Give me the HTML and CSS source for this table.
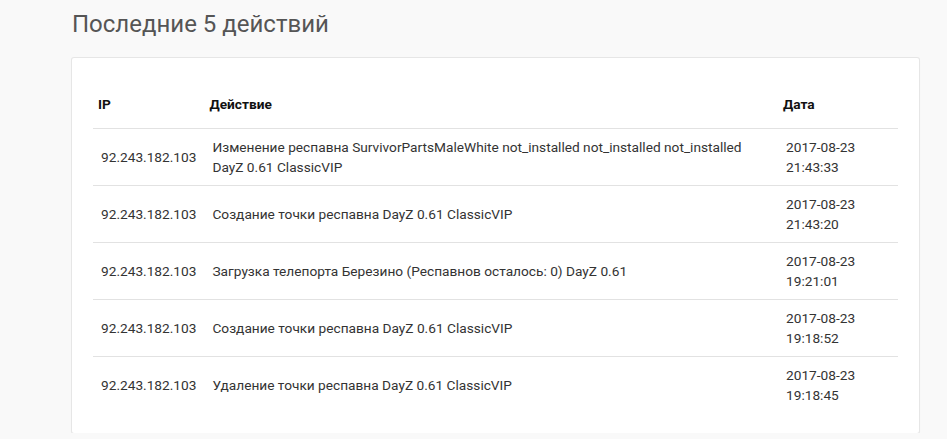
FILE: index.html
```html
<!DOCTYPE html>
<html lang="ru">
<head>
<meta charset="utf-8">
<title>Последние 5 действий</title>
<link rel="stylesheet" href="styles.css">
</head>
<body>
<main class="page">
  <h1 class="title">Последние 5 действий</h1>
  <section class="card">
    <table class="log">
      <thead>
        <tr>
          <th class="col-ip">IP</th>
          <th class="col-action">Действие</th>
          <th class="col-date">Дата</th>
        </tr>
      </thead>
      <tbody>
        <tr>
          <td>92.243.182.103</td>
          <td>Изменение респавна SurvivorPartsMaleWhite not_installed not_installed not_installed DayZ 0.61 ClassicVIP</td>
          <td>2017-08-23<br>21:43:33</td>
        </tr>
        <tr>
          <td>92.243.182.103</td>
          <td>Создание точки респавна DayZ 0.61 ClassicVIP</td>
          <td>2017-08-23<br>21:43:20</td>
        </tr>
        <tr>
          <td>92.243.182.103</td>
          <td>Загрузка телепорта Березино (Респавнов осталось: 0) DayZ 0.61</td>
          <td>2017-08-23<br>19:21:01</td>
        </tr>
        <tr>
          <td>92.243.182.103</td>
          <td>Создание точки респавна DayZ 0.61 ClassicVIP</td>
          <td>2017-08-23<br>19:18:52</td>
        </tr>
        <tr class="last">
          <td>92.243.182.103</td>
          <td>Удаление точки респавна DayZ 0.61 ClassicVIP</td>
          <td>2017-08-23<br>19:18:45</td>
        </tr>
      </tbody>
    </table>
  </section>
</main>
</body>
</html>
```
FILE: styles.css
```css
html, body {
  margin: 0;
  padding: 0;
  background: #f9f9f9;
  font-family: Roboto, "Liberation Sans", sans-serif;
}
.page {
  padding: 0 28px 0 72px;
  width: 847px;
}
.title {
  margin: 0;
  padding-top: 9px;
  height: 58px;
  box-sizing: border-box;
  font-size: 24px;
  line-height: 30px;
  font-weight: 400;
  color: #555;
}
.card {
  background: #fff;
  border-radius: 2px;
  box-shadow: 0 0 0 1px #e6e6e6, 0 1px 2px rgba(0,0,0,0.08);
  padding: 22px 21px 20px;
}
.log {
  width: 100%;
  border-collapse: collapse;
  font-size: 13.7px;
  line-height: 20px;
  color: #333;
}
.log th {
  text-align: left;
  font-weight: 700;
  color: #111;
  padding: 14px 5px 14px 5px;
  border-bottom: 1px solid #e2e2e2;
}
.log td {
  padding: 8px 8px 8px 8px;
  vertical-align: top;
  border-bottom: 1px solid #e2e2e2;
}
.log tr.last td {
  border-bottom: none;
}
.log td:first-child {
  vertical-align: middle;
}
.log td:nth-child(2) {
  vertical-align: middle;
}
.col-ip { width: 100px; }
.col-date { width: 110px; }
```
